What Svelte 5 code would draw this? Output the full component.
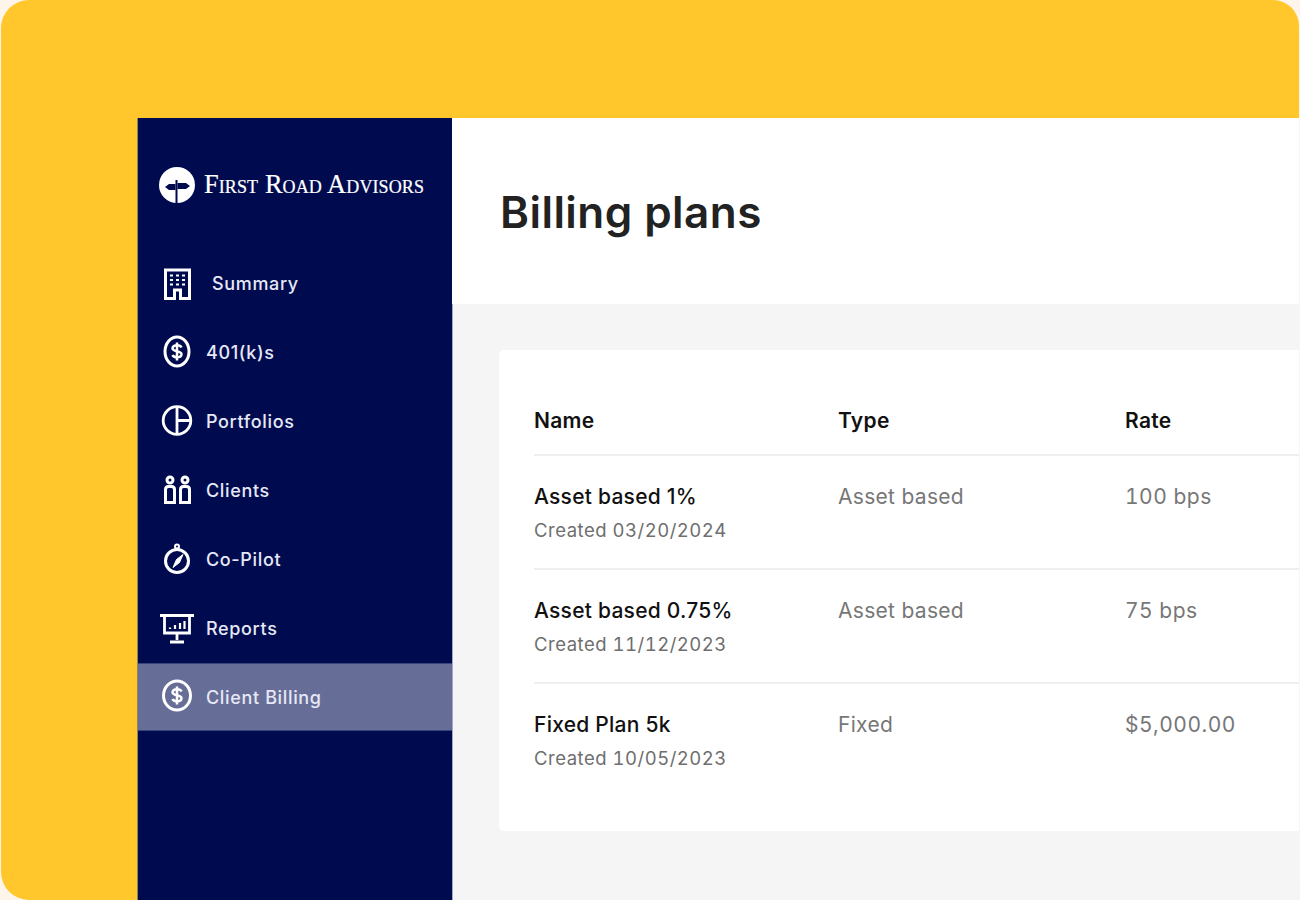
<script>
  const nav = [
    { label: 'Summary', icon: 'building', wide: true },
    { label: '401(k)s', icon: 'dollar', rx: 12 },
    { label: 'Portfolios', icon: 'pie' },
    { label: 'Clients', icon: 'people' },
    { label: 'Co-Pilot', icon: 'compass' },
    { label: 'Reports', icon: 'board' },
    { label: 'Client Billing', icon: 'dollar', rx: 13.500, active: true }
  ];
  const rows = [
    { name: 'Asset based 1%', created: 'Created 03/20/2024', type: 'Asset based', rate: '100 bps' },
    { name: 'Asset based 0.75%', created: 'Created 11/12/2023', type: 'Asset based', rate: '75 bps' },
    { name: 'Fixed Plan 5k', created: 'Created 10/05/2023', type: 'Fixed', rate: '$5,000.00' }
  ];
</script>

<div class="frame">
  <aside class="sidebar">
    <div class="brand">
      <svg class="logo" viewBox="0 0 36 36" aria-hidden="true">
        <circle cx="18" cy="18" r="18" fill="#fff" />
        <rect x="16.500" y="13" width="2" height="23" fill="#000b4f" />
        <path d="M16.500 17H10l-4 3 4 3h6.500z M18.500 16H27l4 3-4 3h-8.500z" fill="#000b4f" />
      </svg>
      <span class="wordmark">First Road Advisors</span>
    </div>
    <nav class="nav">
      {#each nav as item}
        <div class="item" class:active={item.active} class:wide={item.wide}>
          <svg class="icon" viewBox="0 0 36 36" fill="none" stroke="#fff" stroke-width="2.600" aria-hidden="true">
            {#if item.icon === 'building'}
              <path d="M6.500 4h24v28.500h-9v-8.500h-6v8.500h-9z" stroke-width="3" />
              <path d="M11 9.500h3M17 9.500h3M23 9.500h3M11 14h3M17 14h3M23 14h3M11 18.500h3M17 18.500h3M23 18.500h3" stroke-width="2.200" />
            {:else if item.icon === 'dollar'}
              <ellipse cx="18" cy="16.500" rx={item.rx} ry="14.500" stroke-width="3" />
              <path d="M22.500 12.500c-.6-1.500-2.200-2.200-4.500-2.200-2.700 0-4.500 1.200-4.500 3 0 4 9 1.800 9 6 0 1.800-1.800 3-4.500 3-2.300 0-3.900-.7-4.500-2.300M18 7.500v18" stroke-width="2.500" />
            {:else if item.icon === 'pie'}
              <circle cx="18" cy="16.500" r="13.800" stroke-width="2.800" />
              <path d="M18 3v27M18 16.500h13.500" stroke-width="2.800" />
            {:else if item.icon === 'people'}
              <circle cx="11" cy="7" r="3" stroke-width="3" />
              <circle cx="26" cy="7" r="3" stroke-width="3" />
              <path d="M6.500 29.500V16.500q0-3 3-3h3q3 0 3 3v13zM21.500 29.500V16.500q0-3 3-3h3q3 0 3 3v13z" stroke-width="3" />
            {:else if item.icon === 'compass'}
              <circle cx="18" cy="19" r="11.500" stroke-width="3" />
              <circle cx="18" cy="4.500" r="2" stroke-width="2" />
              <path d="M24 12.500l-3.500 8-6.500 5 3.500-8z" fill="#fff" stroke-width="1" />
            {:else}
              <path d="M1 4.500h34" stroke-width="3" />
              <path d="M5.500 5v17h25V5M18 22v7M11 31h14" stroke-width="2.800" />
              <path d="M11 18v-1.500M16 18v-4M21 18v-6M25.500 18V10" stroke-width="2.200" />
            {/if}
          </svg>
          <span>{item.label}</span>
        </div>
      {/each}
    </nav>
  </aside>

  <main class="main">
    <header class="head"><h1>Billing plans</h1></header>
    <div class="body">
      <section class="card">
        <div class="row headrow">
          <div>Name</div>
          <div>Type</div>
          <div>Rate</div>
        </div>
        {#each rows as r, i}
          <div class="row datarow" class:last={i === rows.length - 1}>
            <div class="namecell">
              <div class="name">{r.name}</div>
              <div class="created">{r.created}</div>
            </div>
            <div class="muted type">{r.type}</div>
            <div class="muted rate">{r.rate}</div>
          </div>
        {/each}
      </section>
    </div>
    <div class="strip"></div>
  </main>
</div>

<style>
  :global(body) {
    margin: 0;
    background: #fdf5ea;
    overflow: hidden;
  }
  .frame {
    box-sizing: border-box;
    width: 1298px;
    height: 900px;
    margin-left: 1px;
    padding: 118px 0 0 136px;
    background: #ffc72c;
    border-radius: 28px 26px 0 28px;
    display: flex;
    font-family: Inter, "Liberation Sans", sans-serif;
  }
  .sidebar {
    width: 315px;
    flex: none;
    background: #000b4f;
    border-left: 1px solid #8a8462;
    color: #fff;
    display: flex;
    flex-direction: column;
    box-sizing: border-box;
    padding-top: 49px;
  }
  .brand {
    display: flex;
    align-items: center;
    gap: 9px;
    padding-left: 21px;
    height: 36px;
    margin-bottom: 1px;
  }
  .logo {
    width: 36px;
    height: 36px;
    flex: none;
  }
  .wordmark {
    font-family: "Liberation Serif", serif;
    font-variant: small-caps;
    font-size: 26.400px;
    letter-spacing: 0.100px;
    -webkit-text-stroke: 0.200px #fff;
    white-space: nowrap;
    line-height: 1;
    padding-bottom: 2px;
  }
  .nav {
    margin-top: 45px;
    display: flex;
    flex-direction: column;
  }
  .item {
    height: 69px;
    box-sizing: border-box;
    display: flex;
    align-items: center;
    gap: 14px;
    padding-left: 24px;
    font-size: 18px;
    font-weight: 500;
    letter-spacing: 0.650px;
    color: #e6e8f6;
  }
  .item.wide {
    gap: 20px;
  }
  .item.active {
    height: 68px;
    background: #666e97;
    border-top: 1px solid #3a4478;
    border-bottom: 1px solid #3a4478;
  }
  .icon {
    width: 36px;
    height: 36px;
    margin: 0 -3px;
    flex: none;
  }
  .main {
    flex: 1;
    min-width: 0;
    margin-right: -2px;
    position: relative;
    overflow: hidden;
    display: flex;
    flex-direction: column;
    background: #f5f5f5;
  }
  .strip {
    position: absolute;
    top: 0;
    right: 0;
    bottom: 20px;
    width: 2px;
    background: #fdf5ea;
  }
  .head {
    height: 186px;
    flex: none;
    background: #fff;
    display: flex;
    align-items: center;
    padding: 2px 0 0 48px;
    box-sizing: border-box;
  }
  h1 {
    margin: 0;
    font-size: 44px;
    font-weight: 600;
    color: #222;
    letter-spacing: 0.450px;
  }
  .body {
    flex: 1;
    border-left: 1px solid #a4a8c6;
    padding: 46px 0 0 46px;
  }
  .card {
    background: #fff;
    border-radius: 5px 0 0 5px;
    height: 481px;
    padding: 0 0 0 35px;
    box-sizing: border-box;
  }
  .row {
    display: grid;
    grid-template-columns: 304px 287px 1fr;
    border-bottom: 2px solid #efefef;
    box-sizing: border-box;
  }
  .headrow {
    height: 106px;
    align-items: end;
    padding-bottom: 21px;
    font-size: 21px;
    font-weight: 600;
    letter-spacing: 0.300px;
    color: #111;
  }
  .datarow {
    height: 114px;
    padding-top: 27px;
    font-size: 21px;
  }
  .datarow.last {
    border-bottom: 0;
  }
  .name {
    font-weight: 500;
    letter-spacing: 0.250px;
    color: #111;
    line-height: 28px;
  }
  .created {
    margin-top: 6px;
    font-size: 18.500px;
    letter-spacing: 0.500px;
    font-variant-numeric: tabular-nums;
    color: #6e6e6e;
    line-height: 26px;
  }
  .muted {
    color: #777;
    line-height: 28px;
  }
  .type {
    letter-spacing: 0.300px;
  }
  .rate {
    letter-spacing: 0.500px;
    font-variant-numeric: tabular-nums;
  }
</style>
